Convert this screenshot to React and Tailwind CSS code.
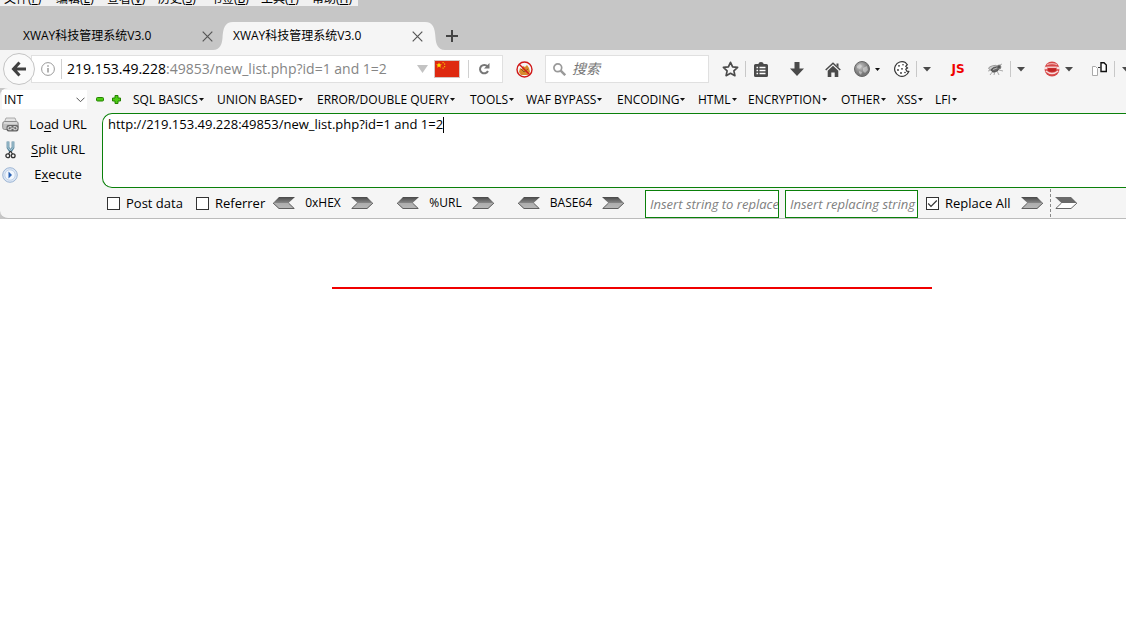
import React from "react";

const MENUS = [
  ["文件(F)", "w-[52px]"], ["编辑(E)", "w-[51px]"], ["查看(V)", "w-[51px]"], ["历史(S)", "w-[52px]"],
  ["书签(B)", "w-[51px]"], ["工具(T)", "w-[51px]"], ["帮助(H)", "w-[46px]"],
];

const HACK_MENUS = [
  ["SQL BASICS", "w-[84px]"], ["UNION BASED", "w-[100px]"], ["ERROR/DOUBLE QUERY", "w-[153px]"],
  ["TOOLS", "w-[56px]"], ["WAF BYPASS", "w-[91px]"], ["ENCODING", "w-[81px]"], ["HTML", "w-[50px]"],
  ["ENCRYPTION", "w-[93px]"], ["OTHER", "w-[56px]"], ["XSS", "w-[38px]"], ["LFI", "w-[30px]"],
];

function Cross() {
  return (
    <svg width="11" height="11" viewBox="0 0 11 11" stroke="#555" strokeWidth="1.2"><path d="M.7.7l9.6 9.6M10.3.7L.7 10.3" /></svg>
  );
}

function Caret({ small }) {
  return small ? (
    <svg className="shrink-0" width="5" height="3" viewBox="0 0 5 3"><path d="M0 0h5L2.5 3z" fill="#111" /></svg>
  ) : (
    <svg className="shrink-0" width="8" height="5" viewBox="0 0 8 5"><path d="M0 0h8L4 4.6z" fill="#4a4a4a" /></svg>
  );
}

function Divider() {
  return <span className="h-4 w-px shrink-0 bg-[#c8c8c8]" />;
}

function Tool({ label, w, children }) {
  return (
    <button type="button" aria-label={label} className={"flex h-6 shrink-0 items-center justify-center " + w}>{children}</button>
  );
}

function Flag() {
  return (
    <svg className="shrink-0" width="26" height="18" viewBox="0 0 26 18">
      <rect x=".5" y=".5" width="25" height="17" fill="#de2910" stroke="#d5c5c2" />
      <path d="M5 2.4l.8 1.9 2 .1-1.5 1.3.5 2L5 6.600l-1.800 1.100.5-2-1.500-1.300 2-.1z" fill="#ffde00" />
      <g fill="#f5b800"><rect x="8.500" y="2" width="1.200" height="1.200" /><rect x="10" y="3.500" width="1.200" height="1.200" /><rect x="10" y="6" width="1.200" height="1.200" /><rect x="8.500" y="7.500" width="1.200" height="1.200" /></g>
    </svg>
  );
}

function Arrow({ left, hollow, label }) {
  return (
    <button type="button" aria-label={label} className="shrink-0">
      <svg className={left ? "block -scale-x-100" : "block"} width="22" height="12" viewBox="0 0 22 12">
        <defs>
          <linearGradient id="steel" x1="0" y1="0" x2="0" y2="1">
            <stop offset="0" stopColor="#484848" /><stop offset=".48" stopColor="#858585" />
            <stop offset=".52" stopColor="#adadad" /><stop offset="1" stopColor="#b8b8b8" />
          </linearGradient>
        </defs>
        <path d="M0 0h16l6 6-6 6H0l6.500-6z" fill={hollow ? "#fff" : "url(#steel)"} />
        {hollow && <path d="M0 0h16l6 6H6.500z" fill="#6a6a6a" />}
        <path d="M22 6l-6 5.500H.8L6.500 6" fill="none" stroke="#555" strokeWidth=".9" />
      </svg>
    </button>
  );
}

function Tab({ active }) {
  return (
    <div role="tab" aria-selected={!!active} className={"flex h-7 w-[190px] items-center justify-between " + (active ? "bg-[#f5f5f5]" : "")}>
      <span className="whitespace-nowrap">XWAY科技管理系统V3.0</span>
      <button type="button" aria-label="关闭标签页"><Cross /></button>
    </div>
  );
}

function Check({ id, label, checked }) {
  return (
    <label htmlFor={id} className="flex shrink-0 items-center gap-1.5 whitespace-nowrap">
      <span className="relative grid size-[13px] place-items-center">
        <input id={id} type="checkbox" defaultChecked={checked} className="peer size-[13px] appearance-none border border-[#333] bg-white" />
        <svg className="pointer-events-none absolute hidden peer-checked:block" width="11" height="9" viewBox="0 0 11 9" fill="none" stroke="#333" strokeWidth="1.200"><path d="M1.200 4.500l2.800 2.800L9.800 1.500" /></svg>
      </span>
      {label}
    </label>
  );
}

function Codec({ name, w }) {
  return (
    <div className={"flex shrink-0 items-center justify-between " + w}>
      <Arrow left label={name + " decode"} />
      <span className="text-xs">{name}</span>
      <Arrow label={name + " encode"} />
    </div>
  );
}

function Printer() {
  return (
    <svg width="17" height="15" viewBox="0 0 17 15">
      <path d="M4 1h9l2 5H2z" fill="#e4e4e4" stroke="#999" strokeWidth=".8" />
      <rect x=".7" y="4.500" width="15.500" height="8" rx="2" fill="#c0c0c0" stroke="#8c8c8c" />
      <path d="M2 6h13" stroke="#eee" />
      <rect x="4.500" y="8" width="12" height="6.500" rx="2" fill="#666" />
      <path d="M9.500 9.700H7.500a1.500 1.500 0 000 3h2m2-3h2a1.500 1.500 0 010 3h-2M8.500 11.200h4" fill="none" stroke="#eee" />
    </svg>
  );
}

function Scissors() {
  return (
    <svg width="11" height="18" viewBox="0 0 11 18" fill="none">
      <path d="M3 .5v6l2.500 4M8 .5v6l-2.500 4" stroke="#5f8ca3" strokeWidth="2.800" />
      <path d="M3 1v5.500l2.500 3M8 1v5.500l-2.500 3" stroke="#c4dce6" strokeWidth=".9" />
      <path d="M5.500 10L3.500 13M5.500 10l2 3" stroke="#333" strokeWidth="1.300" />
      <circle cx="2.800" cy="14.800" r="1.900" stroke="#333" strokeWidth="1.300" /><circle cx="8.200" cy="14.800" r="1.900" stroke="#333" strokeWidth="1.300" />
    </svg>
  );
}

function Play() {
  return (
    <svg width="16" height="16" viewBox="0 0 16 16">
      <circle cx="8" cy="8" r="7.300" fill="#dce7f5" stroke="#9db5d4" />
      <circle cx="8" cy="8" r="5.200" fill="#f2f7fd" stroke="#c3d3e8" />
      <path d="M6.500 4.500L10 8l-3.500 3.500z" fill="#2a63b5" />
    </svg>
  );
}

function Side({ icon, first, keyChar, rest }) {
  return (
    <button type="button" className="flex h-[25px] items-center pb-0.5 text-[13px]">
      <span className="flex w-5 shrink-0 justify-center">{icon}</span>
      <span className="flex-1 whitespace-nowrap pl-1.5 text-center">{first}<u className="underline-offset-2">{keyChar}</u>{rest}</span>
    </button>
  );
}

export default function App() {
  return (
    <div className="flex min-h-screen flex-col overflow-hidden bg-white font-['Open_Sans','Noto_Sans_CJK_SC',sans-serif] text-xs text-black">
      <header className="bg-[#c6c6c6]">
        <nav className="flex h-1.5 w-[358px] items-end overflow-hidden bg-[#f0f0f0] pb-px pl-1">
          {MENUS.map(([m, w]) => (
            <a key={m} href="#" className={"shrink-0 whitespace-nowrap leading-3 " + w}>{m.slice(0, 3)}<u>{m[3]}</u>)</a>
          ))}
        </nav>
        <div role="tablist" className="flex items-end pl-[23px] pt-4">
          <Tab />
          <svg className="shrink-0" width="20" height="28" viewBox="0 0 20 28"><path d="M0 28C7 28 9 22 9.500 16C10 6 12 0 20 0V28z" fill="#f5f5f5" /></svg>
          <Tab active />
          <svg className="shrink-0" width="22" height="28" viewBox="0 0 22 28"><path d="M22 28C15 28 13 22 12.500 16C12 6 10 0 2 0H0V28z" fill="#f5f5f5" /></svg>
          <button type="button" aria-label="新标签页" className="grid h-7 w-3.5 place-items-center">
            <svg width="12" height="12" viewBox="0 0 12 12" stroke="#444" strokeWidth="2"><path d="M6 0v12M0 6h12" /></svg>
          </button>
        </div>
      </header>

      <div className="flex h-[38px] items-center bg-[#f5f5f5] pl-[3px]">
        <button type="button" aria-label="后退" className="z-10 grid size-8 shrink-0 place-items-center rounded-full border border-[#c4c4c4] bg-[#fafafa]">
          <svg width="16" height="16" viewBox="0 0 16 16" fill="none" stroke="#404040" strokeWidth="3"><path d="M8.500 1.500L2.500 8l6 6.500M3 8h12" /></svg>
        </button>
        <div className="-ml-1 flex h-7 min-w-0 flex-1 items-center border border-[#e0e0e0] bg-white pl-[9px]">
          <svg className="shrink-0" width="14" height="14" viewBox="0 0 14 14" fill="none" stroke="#999"><circle cx="7" cy="7" r="6.400" /><path d="M7 6v4.500M7 3.300v1.400" strokeWidth="1.500" /></svg>
          <span className="ml-1.5 h-5 w-px shrink-0 bg-[#d0d0d0]" />
          <div className="ml-[5px] min-w-0 flex-1 whitespace-nowrap text-sm text-[#858585]"><span className="text-black">219.153.49.228</span>:49853/new_list.php?id=1 and 1=2</div>
          <svg className="mr-1.5 shrink-0" width="11" height="8" viewBox="0 0 11 8"><path d="M0 0h11L5.500 8z" fill="#c3c3c3" /></svg>
          <Flag />
          <span className="ml-2 h-[18px] w-px shrink-0 bg-[#d0d0d0]" />
          <Tool label="刷新" w="w-[33px] pr-1">
            <svg width="12" height="12" viewBox="0 0 12 12" fill="none" stroke="#777" strokeWidth="2"><path d="M9.500 3.500A4.200 4.200 0 1010 8" /><path d="M11.500 0v5.500H6z" fill="#777" stroke="none" /></svg>
          </Tool>
        </div>
        <Tool label="拦截" w="w-[42px]">
          <svg width="17" height="17" viewBox="0 0 17 17" fill="none"><path d="M3 11l1-4 2 1 1-3 2 1 2-2 2 3 1 4-2 3H5z" fill="#d98a2b" /><path d="M5 8l3 3 4-3" stroke="#8a5a20" /><circle cx="8.500" cy="8.500" r="7.500" stroke="#d01818" strokeWidth="1.400" /><path d="M3.200 3.200l10.600 10.600" stroke="#d01818" strokeWidth="1.400" /></svg>
        </Tool>
        <div className="flex h-7 w-[164px] shrink-0 items-center gap-1.5 border border-[#e0e0e0] bg-white pl-[7px]">
          <svg className="shrink-0" width="13" height="13" viewBox="0 0 13 13" fill="none" stroke="#999"><circle cx="4.800" cy="4.800" r="3.900" strokeWidth="1.700" /><path d="M7.700 7.700l4.500 4.500" strokeWidth="2.400" /></svg>
          <input aria-label="搜索" placeholder="搜索" className="w-full min-w-0 bg-transparent text-sm italic outline-none placeholder:text-[#777]" />
        </div>
        <div className="flex shrink-0 items-center pl-[7px]">
          <Tool label="收藏" w="w-[29px]">
            <svg width="17" height="16" viewBox="0 0 17 16" fill="none" stroke="#4a4a4a" strokeWidth="1.700" strokeLinejoin="round"><path d="M8.500 1.300l2.100 4.500 5 .6-3.700 3.400 1 4.900-4.400-2.400-4.400 2.400 1-4.900L1.400 6.400l5-.6z" /></svg>
          </Tool>
          <Divider />
          <Tool label="书签" w="w-[30px]">
            <svg width="14" height="15" viewBox="0 0 14 15"><path d="M1.500 2h3c0-1.300 1-2 2.500-2s2.500.7 2.500 2h3Q14 2 14 3.500v10q0 1.500-1.500 1.500h-11Q0 15 0 13.500v-10Q0 2 1.500 2z" fill="#4a4a4a" /><path d="M2.500 5.500h1.600M5.500 5.500h6M2.500 8.500h1.600M5.500 8.500h6M2.500 11.500h1.600M5.500 11.500h6" stroke="#fff" strokeWidth="1.500" /></svg>
          </Tool>
          <Tool label="下载" w="w-[42px]"><svg width="14" height="14" viewBox="0 0 14 14" fill="#4a4a4a"><path d="M4.500 0h5v6.500H14L7 14 0 6.500h4.500z" /></svg></Tool>
          <Tool label="主页" w="w-[30px]"><svg width="16" height="15" viewBox="0 0 16 15"><path d="M.7 8L8 1.200 15.300 8" fill="none" stroke="#4a4a4a" strokeWidth="1.500" /><path d="M11.500 1.500h2v4l-2-2zM8 3.800l5.300 4.900V15H9.700v-4.500H6.300V15H2.700V8.700z" fill="#4a4a4a" /></svg></Tool>
          <Tool label="代理" w="w-[27px]">
            <svg width="16" height="16" viewBox="0 0 16 16"><defs><radialGradient id="globe" cx=".4" cy=".35"><stop stopColor="#c4c4c4" /><stop offset="1" stopColor="#777" /></radialGradient></defs><circle cx="8" cy="8" r="7.500" fill="url(#globe)" stroke="#666" /><path d="M3 5l3-2 2 2-2 3-3-1zM9 7l4-2 1 4-3 3-2-2zM5 10l3 1-1 3-2-2z" fill="#e0e0e0" opacity=".55" /></svg>
          </Tool>
          <span className="mr-2 flex w-1 justify-center"><Caret small /></span>
          <Tool label="Cookies" w="w-[29px]">
            <svg width="16" height="16" viewBox="0 0 16 16" fill="#fff" stroke="#333"><path d="M11.500 1.600A7.300 7.300 0 1014.800 10.500l-2-.3-1-2 1.700-1.200-1.700-1.700 1.500-1.600z" strokeWidth="1.200" /><g fill="#333" stroke="none"><circle cx="5" cy="4.800" r=".9" /><circle cx="9" cy="3.800" r=".8" /><circle cx="4" cy="9" r=".9" /><circle cx="8" cy="7.800" r=".9" /><circle cx="7" cy="12" r=".9" /><circle cx="11" cy="11.500" r=".8" /></g></svg>
          </Tool>
          <Divider />
          <Tool label="更多 Cookies" w="w-5"><Caret /></Tool>
          <Tool label="JavaScript" w="w-[42px]"><span className="font-[DejaVu_Sans] text-xs font-bold text-[#f00000]">JS</span></Tool>
          <Tool label="Firebug" w="w-[31px]">
            <svg width="16" height="13" viewBox="0 0 16 13" fill="none" stroke="#888" strokeWidth=".7"><path d="M2 5h12M3 12l3-4M7 12l1-4M12 12l-2-4M1 8l4-1M11 3l4-2M12 7l4 1" /><ellipse cx="6" cy="4.500" rx="4.500" ry="1.800" fill="#ccc" transform="rotate(-15 6 4.500)" /><ellipse cx="8" cy="6.500" rx="3.800" ry="2.300" fill="#666" stroke="#444" transform="rotate(-20 8 6.500)" /><circle cx="12" cy="4" r="2" fill="#555" /><path d="M6 6.500l4-1.500" stroke="#ddd" /></svg>
          </Tool>
          <Divider />
          <Tool label="更多 Firebug" w="w-5"><Caret /></Tool>
          <div className="ml-2 flex items-center">
            <Tool label="用户代理" w="w-[26px]">
              <svg width="16" height="16" viewBox="0 0 16 16"><circle cx="8" cy="8" r="7.500" fill="#d64848" /><path d="M3 3.800Q8 1.300 13 3.800" stroke="#eeaaaa" strokeWidth="1.200" fill="none" /><path d="M0 5.800h3.300v2.400H0zM12.700 5.800H16v2.400h-3.300z" fill="#f8dede" /><path d="M3.300 6.200h9.400" stroke="#f8dede" strokeWidth="1.300" /><path d="M1.800 10Q8 15 14.200 10" stroke="#f8dede" fill="none" strokeWidth="1.400" /><path d="M4 7.200h8v2.300l-2 1.300H6L4 9.500z" fill="#c02424" /></svg>
            </Tool>
            <Caret />
          </div>
          <div className="ml-[11px] flex items-center">
            <Tool label="复制" w="w-[30px]">
              <svg width="15" height="14" viewBox="0 0 15 14" fill="#fff"><path d="M.5 4.500h3l2 2v7h-5z" stroke="#aaa" /><path d="M9 .7h3L14.300 3v6.500H9z" stroke="#111" strokeWidth="1.400" /><path d="M6 5.500h2.500" stroke="#333" /></svg>
            </Tool>
            <Divider />
            <span className="flex w-[11px] overflow-hidden pl-[7px]"><Caret /></span>
          </div>
        </div>
      </div>

      <div className="bg-[#c6c6c6]">
        <section className="rounded-l-lg border-b border-[#bbb] bg-[#f5f5f5]">
          <div className="mb-0.5 flex h-[23px] items-center pl-0.5">
            <div className="relative flex w-[85px] shrink-0 items-center bg-white">
              <select aria-label="类型" className="h-[19px] w-full appearance-none pl-0.5 text-xs outline-none"><option>INT</option></select>
              <svg className="pointer-events-none absolute right-0.5" width="9" height="6" viewBox="0 0 9 6" fill="none" stroke="#555"><path d="M.5.7l4 4 4-4" /></svg>
            </div>
            <div className="flex w-[46px] shrink-0 items-center gap-2 pl-[9px]">
              <button type="button" aria-label="减少"><svg width="8" height="9" viewBox="0 0 8 9"><rect x=".5" y="2.500" width="7" height="3.500" rx="1" fill="#4ccc14" stroke="#258200" /></svg></button>
              <button type="button" aria-label="增加"><svg width="9" height="9" viewBox="0 0 9 9"><path d="M3 .5h3V3h2.500v3H6v2.500H3V6H.5V3H3z" fill="#4ccc14" stroke="#258200" /></svg></button>
            </div>
            {HACK_MENUS.map(([m, w]) => (
              <button key={m} type="button" className={"flex shrink-0 items-center gap-px whitespace-nowrap text-left " + w}>{m}<Caret small /></button>
            ))}
          </div>
          <div className="flex">
            <div className="flex w-[102px] shrink-0 flex-col pr-3">
              <Side icon={<Printer />} first="Lo" keyChar="a" rest="d URL" />
              <Side icon={<Scissors />} first="" keyChar="S" rest="plit URL" />
              <Side icon={<Play />} first="E" keyChar="x" rest="ecute" />
            </div>
            <div className="relative flex flex-1">
              <textarea aria-label="URL" defaultValue="http://219.153.49.228:49853/new_list.php?id=1 and 1=2" className="h-[75px] flex-1 resize-none rounded-l-[10px] border border-r-0 border-[#0a800a] bg-white px-[5px] py-px text-[13px] leading-[18px] outline-none" />
              <span className="absolute left-[341px] top-1 h-4 w-px bg-black" />
            </div>
          </div>
          <div className="flex h-[30px] items-center pl-[107px] text-[13px]">
            <div className="w-[89px] shrink-0 pt-0.5"><Check id="post" label="Post data" /></div>
            <div className="w-[77px] shrink-0 pt-0.5"><Check id="ref" label="Referrer" /></div>
            <Codec name="0xHEX" w="w-[100px]" />
            <div className="ml-6 flex gap-6">
              <Codec name="%URL" w="w-[97px]" />
              <Codec name="BASE64" w="w-[106px]" />
            </div>
            <div className="ml-[21px] flex gap-1.5 self-end">
              <input aria-label="Insert string to replace" placeholder="Insert string to replace" className="h-7 w-[134px] border border-[#0a800a] bg-white pl-1 italic outline-none placeholder:text-[#808080]" />
              <input aria-label="Insert replacing string" placeholder="Insert replacing string" className="h-7 w-[133px] border border-[#0a800a] bg-white pl-1 italic outline-none placeholder:text-[#808080]" />
            </div>
            <div className="ml-2 w-[95px] shrink-0 pt-0.5"><Check id="all" label="Replace All" checked /></div>
            <Arrow label="Replace" />
            <span className="ml-[7px] mr-1 h-7 border-l border-dashed border-[#888]" />
            <Arrow hollow label="Replace next" />
          </div>
        </section>
      </div>

      <main className="flex-1 bg-white pl-[138px] pt-[68px]">
        <hr className="mx-auto h-0.5 w-[600px] border-0 bg-[#f00000]" />
      </main>
    </div>
  );
}
